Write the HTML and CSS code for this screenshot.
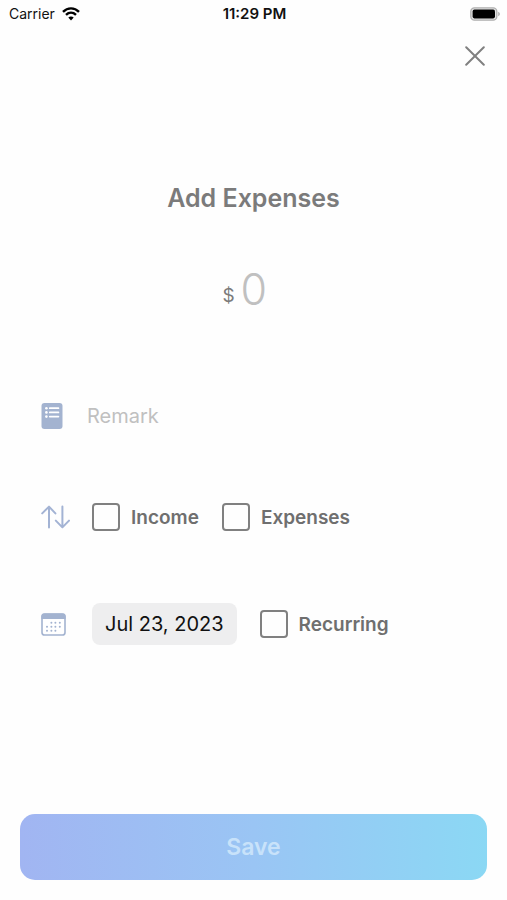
FILE: index.html
```html
<!DOCTYPE html>
<html lang="en">
<head>
    <meta charset="UTF-8">
    <meta name="viewport" content="width=device-width, initial-scale=1.0">
    <title>Add Expenses</title>
    <link rel="stylesheet" href="styles.css">
</head>
<body>

<!-- Status bar -->
<header class="status-bar">
    <div class="carrier">
        <span>Carrier</span>
        <svg width="18" height="14" viewBox="0 0 18 14" fill="none" stroke="#000" stroke-width="2.4">
            <path d="M1 4.8C5.6 0.2 12.4 0.2 17 4.8"/>
            <path d="M4 7.9C7 5.1 11 5.1 14 7.9"/>
            <path d="M9 13.4L6.3 10.6C7.8 9.2 10.2 9.2 11.7 10.6Z" fill="#000" stroke="none"/>
        </svg>
    </div>
    <span class="time">11:29 PM</span>
    <div class="battery">
        <svg width="30" height="14" viewBox="0 0 30 14">
            <rect x="0.8" y="0.8" width="26" height="12.4" rx="3.6" fill="#e4e4e4" stroke="#b0b0b0" stroke-width="1.3"/>
            <rect x="2.6" y="2.6" width="22.4" height="8.8" rx="1.8" fill="#000"/>
            <path d="M28.2 4.8C30.4 5.8 30.4 8.2 28.2 9.2Z" fill="#b0b0b0"/>
        </svg>
    </div>
</header>

<!-- Add expenses form -->
<form class="entry-form">
    <button type="button" class="close-button" aria-label="Close">
        <svg width="20" height="20" viewBox="0 0 20 20" fill="none" stroke="#808080" stroke-width="2" stroke-linecap="round">
            <path d="M1.2 1.2L18.8 18.8M18.8 1.2L1.2 18.8"/>
        </svg>
    </button>

    <h1>Add Expenses</h1>

    <div class="amount">
        <label for="amount">$</label>
        <input type="text" id="amount" inputmode="decimal" placeholder="0">
    </div>

    <div class="rows">
        <div class="row">
            <label class="row-icon" for="remark" aria-label="Remark">
                <svg width="22" height="26" viewBox="0 0 22 26">
                    <rect x="0.5" width="21" height="26" rx="3" fill="#a3b3d0"/>
                    <g fill="#fff">
                        <circle cx="5.4" cy="5.2" r="1.3"/>
                        <circle cx="5.4" cy="9.4" r="1.3"/>
                        <circle cx="5.4" cy="13.6" r="1.3"/>
                    </g>
                    <path d="M8.8 5.2H17.4M8.8 9.4H17.4M8.8 13.6H17.4" stroke="#fff" stroke-width="1.8" stroke-linecap="round"/>
                </svg>
            </label>
            <input type="text" id="remark" class="remark" placeholder="Remark">
        </div>

        <div class="row">
            <span class="row-icon">
                <svg width="29" height="24" viewBox="0 0 29 24" fill="none" stroke="#a3b3d4" stroke-width="2" stroke-linecap="round" stroke-linejoin="round">
                    <path d="M8 22.5V1.8M1.2 8.4L8 1.6L14.4 8.4"/>
                    <path d="M21.4 1.5V22.2M14.8 15.6L21.4 22.4L28 15.6"/>
                </svg>
            </span>
            <div class="choices">
                <label class="check"><input type="checkbox" name="income">Income</label>
                <label class="check"><input type="checkbox" name="expenses">Expenses</label>
            </div>
        </div>

        <div class="row">
            <span class="row-icon">
                <svg width="25" height="23" viewBox="0 0 25 23">
                    <rect x="1" y="1" width="23" height="21" rx="2.6" fill="#fff" stroke="#a3b3d0" stroke-width="1.6"/>
                    <path d="M0.4 6V3.4Q0.4 0.4 3.4 0.4H21.6Q24.6 0.4 24.6 3.4V6Z" fill="#a3b3d0"/>
                    <g fill="#a3b3d0">
                        <circle cx="10.4" cy="9.8" r="1"/>
                        <circle cx="14.4" cy="9.8" r="1"/>
                        <circle cx="18.8" cy="9.8" r="1"/>
                        <circle cx="6" cy="13.8" r="1"/>
                        <circle cx="10.4" cy="13.8" r="1"/>
                        <circle cx="14.4" cy="13.8" r="1"/>
                        <circle cx="18.8" cy="13.8" r="1"/>
                        <circle cx="6" cy="17.8" r="1"/>
                        <circle cx="10.4" cy="17.8" r="1"/>
                        <circle cx="14.4" cy="17.8" r="1"/>
                    </g>
                </svg>
            </span>
            <div class="choices">
                <button type="button" class="date-button">Jul 23, 2023</button>
                <label class="check"><input type="checkbox" name="recurring">Recurring</label>
            </div>
        </div>
    </div>

    <button type="submit" class="save-button">Save</button>
</form>

</body>
</html>
```

FILE: styles.css
```css
* {
    box-sizing: border-box;
}

body {
    font-family: Inter, "Liberation Sans", sans-serif;
    margin: 0;
    display: flex;
    flex-direction: column;
    min-height: 100vh;
    background-color: #fefefe;
    color: #6f6f6f;
}

svg {
    display: block;
}

button,
input {
    font-family: inherit;
    margin: 0;
    padding: 0;
    border: none;
    background: none;
}

/* Status bar */
.status-bar {
    display: grid;
    grid-template-columns: 1fr auto 1fr;
    align-items: center;
    height: 27px;
    padding: 0 7px 0 9px;
    font-size: 14px;
    color: #111;
}

.carrier {
    display: flex;
    align-items: center;
    gap: 7px;
}

.time {
    font-size: 15px;
    font-weight: 600;
}

.battery {
    justify-self: end;
}

/* Form */
.entry-form {
    flex: 1;
    display: flex;
    flex-direction: column;
    padding: 19px 20px 20px;
}

.close-button {
    align-self: flex-end;
    margin-right: 2px;
    cursor: pointer;
}

h1 {
    margin: 116px 0 0;
    font-size: 25px;
    line-height: 32px;
    font-weight: 600;
    text-align: center;
    color: #7b7b7b;
}

.amount {
    display: flex;
    justify-content: center;
    align-items: flex-end;
    gap: 6px;
    margin: 47px 18px 84px 0;
    color: #7b7b7b;
}

.amount label {
    padding-bottom: 10px;
    font-size: 19px;
}

.amount input {
    width: 26px;
    height: 56px;
    font-size: 43px;
    font-weight: 300;
}

input::placeholder {
    color: #c0c0c0;
    opacity: 1;
}

/* Rows */
.rows {
    display: flex;
    flex-direction: column;
    gap: 71px;
    padding-left: 21px;
}

.row {
    display: flex;
    align-items: center;
    min-height: 30px;
}

.row-icon {
    width: 46px;
    flex-shrink: 0;
}

.remark {
    flex: 1;
    min-width: 0;
    font-size: 20px;
}

.choices {
    display: flex;
    align-items: center;
    gap: 23px;
    padding-left: 5px;
}

.check {
    display: flex;
    align-items: center;
    gap: 11px;
    font-size: 19px;
    font-weight: 600;
}

.check input {
    appearance: none;
    width: 28px;
    height: 28px;
    border: 2px solid #808080;
    border-radius: 4px;
}

.check input:checked {
    background-color: #a3b3d0;
}

.date-button {
    height: 42px;
    padding: 0 13px;
    border-radius: 8px;
    background-color: #eeeeef;
    font-size: 20px;
    color: #111;
}

/* Save */
.save-button {
    height: 66px;
    margin-top: auto;
    border-radius: 15px;
    background: linear-gradient(to right, #a1b5f2, #9ac5f4 50%, #8bd8f4);
    font-size: 23px;
    font-weight: 600;
    color: #c8e2fa;
    cursor: pointer;
}
```
